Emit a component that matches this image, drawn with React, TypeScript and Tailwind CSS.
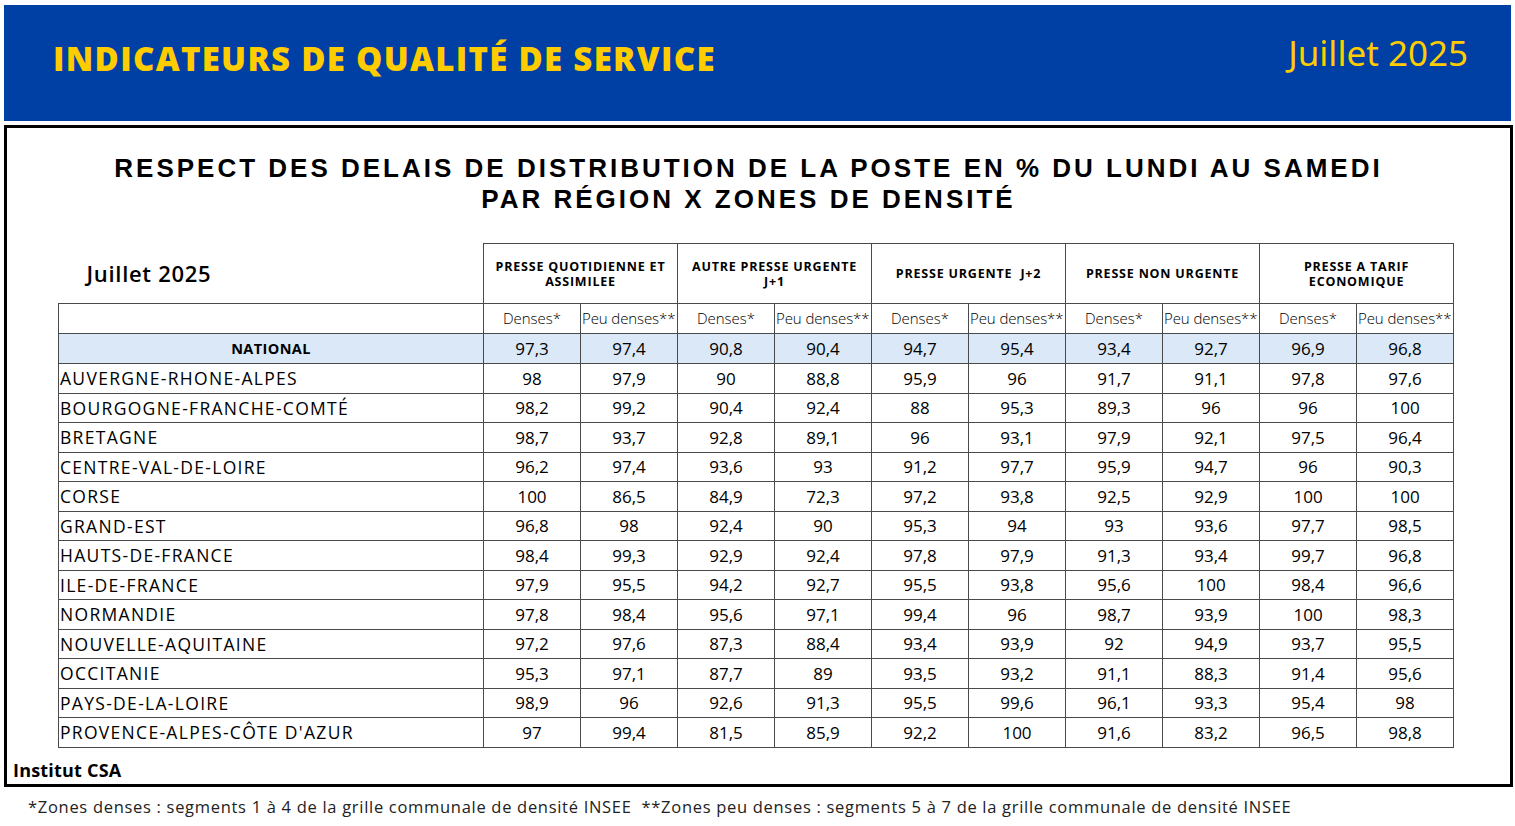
import React from "react";

const rows: [string, string[]][] = [
  ["AUVERGNE-RHONE-ALPES", ["98", "97,9", "90", "88,8", "95,9", "96", "91,7", "91,1", "97,8", "97,6"]],
  ["BOURGOGNE-FRANCHE-COMTÉ", ["98,2", "99,2", "90,4", "92,4", "88", "95,3", "89,3", "96", "96", "100"]],
  ["BRETAGNE", ["98,7", "93,7", "92,8", "89,1", "96", "93,1", "97,9", "92,1", "97,5", "96,4"]],
  ["CENTRE-VAL-DE-LOIRE", ["96,2", "97,4", "93,6", "93", "91,2", "97,7", "95,9", "94,7", "96", "90,3"]],
  ["CORSE", ["100", "86,5", "84,9", "72,3", "97,2", "93,8", "92,5", "92,9", "100", "100"]],
  ["GRAND-EST", ["96,8", "98", "92,4", "90", "95,3", "94", "93", "93,6", "97,7", "98,5"]],
  ["HAUTS-DE-FRANCE", ["98,4", "99,3", "92,9", "92,4", "97,8", "97,9", "91,3", "93,4", "99,7", "96,8"]],
  ["ILE-DE-FRANCE", ["97,9", "95,5", "94,2", "92,7", "95,5", "93,8", "95,6", "100", "98,4", "96,6"]],
  ["NORMANDIE", ["97,8", "98,4", "95,6", "97,1", "99,4", "96", "98,7", "93,9", "100", "98,3"]],
  ["NOUVELLE-AQUITAINE", ["97,2", "97,6", "87,3", "88,4", "93,4", "93,9", "92", "94,9", "93,7", "95,5"]],
  ["OCCITANIE", ["95,3", "97,1", "87,7", "89", "93,5", "93,2", "91,1", "88,3", "91,4", "95,6"]],
  ["PAYS-DE-LA-LOIRE", ["98,9", "96", "92,6", "91,3", "95,5", "99,6", "96,1", "93,3", "95,4", "98"]],
  ["PROVENCE-ALPES-CÔTE D'AZUR", ["97", "99,4", "81,5", "85,9", "92,2", "100", "91,6", "83,2", "96,5", "98,8"]],
];

const national = ["97,3", "97,4", "90,8", "90,4", "94,7", "95,4", "93,4", "92,7", "96,9", "96,8"];

const groups: React.ReactNode[] = [
  <>PRESSE QUOTIDIENNE ET<br />ASSIMILEE</>,
  <>AUTRE PRESSE URGENTE<br />J+1</>,
  <>PRESSE URGENTE&nbsp; J+2</>,
  <>PRESSE NON URGENTE</>,
  <>PRESSE A TARIF<br />ECONOMIQUE</>,
];

const font = { fontFamily: "'Open Sans', 'Noto Sans', sans-serif" };

export default function App() {
  return (
    <div className="w-[1515px] h-[826px] bg-white text-black overflow-hidden" style={font}>
      <div className="ml-[4px] mt-[5px] w-[1507px] h-[116px] bg-[#003fa4] flex items-start justify-between">
        <div className="ml-[49px] mt-[30px] text-[#ffcc00] text-[33px] font-extrabold tracking-[1.3px] leading-[48px]">
          INDICATEURS DE QUALITÉ DE SERVICE
        </div>
        <div className="mr-[43px] mt-[24px] text-[#ffcc00] text-[35px] leading-[48px] font-normal" style={{ fontFamily: "'Noto Sans', sans-serif" }}>
          Juillet 2025
        </div>
      </div>
      <div className="ml-[4px] mt-[4px] w-[1509px] h-[662px] border-[3px] border-black flex flex-col">
        <div
          className="pt-[25px] pr-[20px] text-center text-[26px] font-bold tracking-[3px] leading-[31px]"
          style={{ fontFamily: "'Liberation Sans', Arial, sans-serif" }}
        >
          <div>RESPECT DES DELAIS DE DISTRIBUTION DE LA POSTE EN % DU LUNDI AU SAMEDI</div>
          <div>PAR RÉGION X ZONES DE DENSITÉ</div>
        </div>
        <table className="ml-[51px] mt-[28px] border-collapse table-fixed w-[1395px]">
          <colgroup>
            <col className="w-[425px]" />
            {Array.from({ length: 10 }).map((_, i) => (
              <col key={i} className="w-[97px]" />
            ))}
          </colgroup>
          <tbody>
            <tr className="h-[60px]">
              <td className="border-b border-[#4a4a4a] pl-[28px] text-[22px] font-semibold tracking-[0.7px] align-middle">Juillet 2025</td>
              {groups.map((g, i) => (
                <td
                  key={i}
                  colSpan={2}
                  className="border border-[#4a4a4a] text-center text-[12.5px] font-bold leading-[15px] tracking-[0.8px]"
                >
                  {g}
                </td>
              ))}
            </tr>
            <tr className="h-[30px]">
              <td className="border border-[#4a4a4a]"></td>
              {Array.from({ length: 5 }).map((_, i) => (
                <React.Fragment key={i}>
                  <td className="border border-[#4a4a4a] text-center text-[15px] font-light whitespace-nowrap">Denses*</td>
                  <td className="border border-[#4a4a4a] text-left pl-[1px] text-[15px] font-light whitespace-nowrap overflow-visible tracking-[-0.1px]">Peu denses**</td>
                </React.Fragment>
              ))}
            </tr>
            <tr className="h-[30px] bg-[#dae8f7]">
              <td className="border border-[#4a4a4a] text-center text-[14.5px] font-bold tracking-[0.4px]">NATIONAL</td>
              {national.map((v, i) => (
                <td key={i} className="border border-[#4a4a4a] text-center text-[17px]">{v}</td>
              ))}
            </tr>
            {rows.map(([name, vals]) => (
              <tr key={name} className="h-[29.5px]">
                <td className="border border-[#4a4a4a] pl-[1px] text-[17.5px] tracking-[1.3px] whitespace-nowrap">{name}</td>
                {vals.map((v, i) => (
                  <td key={i} className="border border-[#4a4a4a] text-center text-[17px]">{v}</td>
                ))}
              </tr>
            ))}
          </tbody>
        </table>
        <div className="mt-auto mb-[3px] ml-[6px] text-[18px] font-bold tracking-[0.2px] leading-[22px]">Institut CSA</div>
      </div>
      <div className="ml-[28px] mt-[9px] text-[16.5px] tracking-[0.7px] text-[#222] leading-[22px] whitespace-nowrap">
        *Zones denses : segments 1 à 4 de la grille communale de densité INSEE&nbsp; **Zones peu denses : segments 5 à 7 de la grille communale de densité INSEE
      </div>
    </div>
  );
}
